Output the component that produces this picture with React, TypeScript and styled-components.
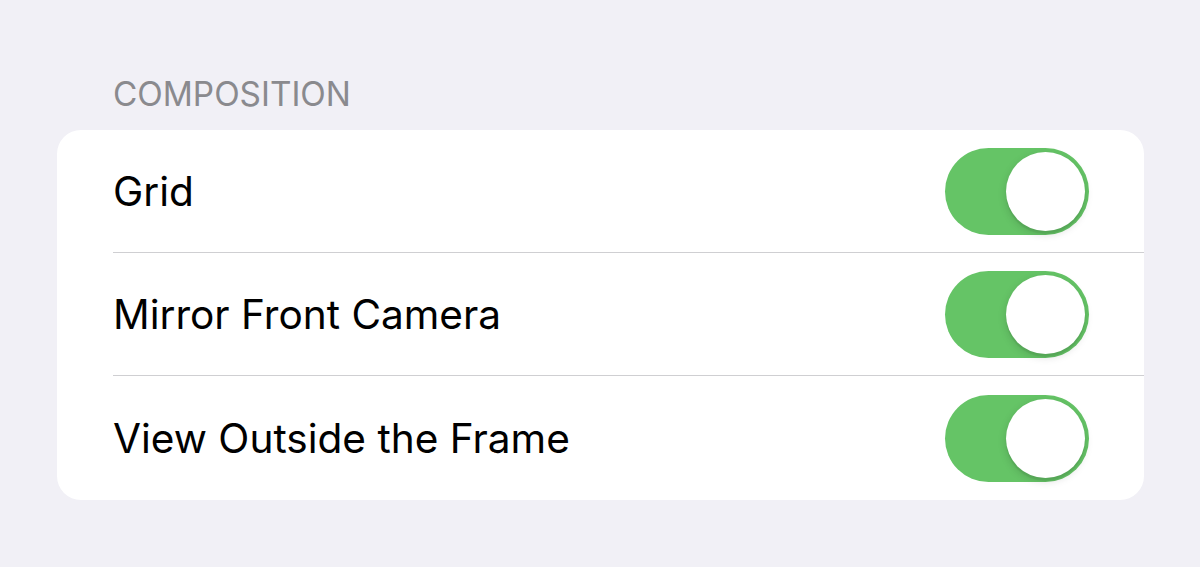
import React from "react";
import styled, { createGlobalStyle } from "styled-components";

const GlobalStyle = createGlobalStyle`
  html, body {
    margin: 0;
    padding: 0;
    background: #f1f0f6;
    font-family: Inter, "Noto Sans", sans-serif;
  }
`;

const settings = [
  { label: "Grid", on: true },
  { label: "Mirror Front Camera", on: true },
  { label: "View Outside the Frame", on: true },
];

const App = () => {
  return (
    <Page>
      <GlobalStyle />
      <SectionHeader>COMPOSITION</SectionHeader>
      <Card>
        {settings.map((item, i) => (
          <Row key={item.label} $last={i === settings.length - 1}>
            <Label>{item.label}</Label>
            <Toggle $on={item.on}>
              <Knob $on={item.on} />
            </Toggle>
          </Row>
        ))}
      </Card>
    </Page>
  );
};

const Page = styled.div`
  width: 1200px;
  height: 567px;
  box-sizing: border-box;
  padding: 74px 56px 0 57px;
  background: #f1f0f6;
`;

const SectionHeader = styled.div`
  padding-left: 56px;
  font-size: 33.3px;
  color: #8a8a8e;
  line-height: 40px;
  height: 56px;
`;

const Card = styled.div`
  background: #ffffff;
  border-radius: 24px;
  padding-left: 56px;
  overflow: hidden;
`;

const Row = styled.div<{ $last: boolean }>`
  height: ${(p) => (p.$last ? "124px" : "123px")};
  display: flex;
  align-items: center;
  justify-content: space-between;
  padding-right: 55px;
  border-bottom: ${(p) => (p.$last ? "none" : "1.5px solid #cfcfd2")};
  box-sizing: border-box;
`;

const Label = styled.span`
  font-size: 40.6px;
  color: #000;
`;

const Toggle = styled.div<{ $on: boolean }>`
  width: 144px;
  height: 87px;
  border-radius: 44px;
  background: ${(p) => (p.$on ? "#65c466" : "#e9e9eb")};
  display: flex;
  align-items: center;
  justify-content: ${(p) => (p.$on ? "flex-end" : "flex-start")};
  padding: 0 4px;
  box-sizing: border-box;
`;

const Knob = styled.div<{ $on: boolean }>`
  width: 79px;
  height: 79px;
  border-radius: 50%;
  background: #fff;
  box-shadow: 0 3px 8px rgba(0, 0, 0, 0.15), 0 3px 1px rgba(0, 0, 0, 0.06);
`;

export default App;
